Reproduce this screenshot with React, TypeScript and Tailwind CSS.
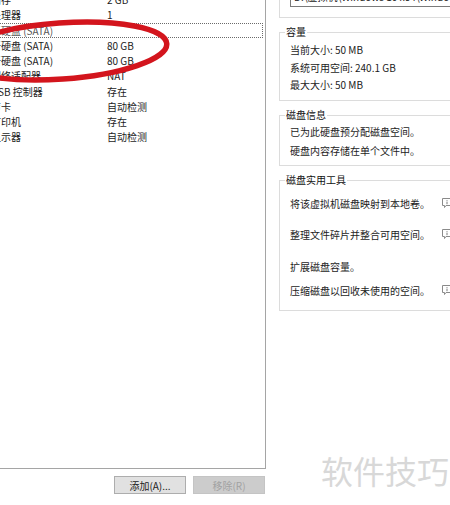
import React from 'react';

const rows: { name: string; value: string; selected?: boolean }[] = [
	{ name: '内存', value: '2 GB' },
	{ name: '处理器', value: '1' },
	{ name: '新硬盘 (SATA)', value: '', selected: true },
	{ name: '新硬盘 (SATA)', value: '80 GB' },
	{ name: '新硬盘 (SATA)', value: '80 GB' },
	{ name: '网络适配器', value: 'NAT' },
	{ name: 'USB 控制器', value: '存在' },
	{ name: '声卡', value: '自动检测' },
	{ name: '打印机', value: '存在' },
	{ name: '显示器', value: '自动检测' },
];

const InfoIcon = () => (
	<svg width="10" height="10" viewBox="0 0 10 10" className="shrink-0">
		<path d="M0.5 7.5V0.5H9.5V7.5H4L2.5 9.5V7.5Z" fill="white" stroke="#8a8a8a" strokeWidth="1" />
		<path d="M5 2v0.8M5 3.6v2.6" stroke="#7a7a7a" strokeWidth="1" />
	</svg>
);

const GroupLabel = ({ children }: { children: React.ReactNode }) => (
	<div className="-mt-[9px] ml-[5px] self-start bg-white px-[1px] leading-[16px] text-[#111]">{children}</div>
);

export default function App() {
	return (
		<div className="relative flex h-[505px] w-[450px] overflow-hidden bg-white font-['Noto_Sans_CJK_SC','Noto_Sans',sans-serif] text-[10px] text-[#1c1c1c]">
			{/* hardware list */}
			<div className="flex w-[266px] shrink-0 flex-col">
				<div className="h-[469px] overflow-hidden border-r border-b border-[#a5a5a5] bg-white">
					<div className="-mt-[8px] -ml-[9px] w-[272px]">
						{rows.map((r, i) => (
							<div
								key={i}
								className={
									'flex h-[15.25px] items-center whitespace-nowrap ' +
									(r.selected ? 'outline-1 -outline-offset-1 outline-dotted outline-[#6a6a6a] text-[#555]' : '')
								}
							>
								<span className="w-[116px]">{r.name}</span>
								<span>{r.value}</span>
							</div>
						))}
					</div>
				</div>
				<div className="mt-[7px] flex justify-end gap-[7px] pr-[1px]">
					<button className="flex h-[18px] w-[72px] items-center justify-center border border-[#adadad] bg-[#e1e1e1] text-[#222]">
						添加(A)...
					</button>
					<button className="flex h-[18px] w-[72px] items-center justify-center border border-[#c4c4c4] bg-[#cccccc] text-[#a2a2a2]">
						移除(R)
					</button>
				</div>
			</div>

			{/* disk settings */}
			<div className="ml-[13px] flex w-[200px] shrink-0 flex-col">
				<div className="h-[18px] border-r border-b border-l border-[#dcdcdc]">
					<div className="-mt-[15px] ml-[10px] h-[22px] w-[200px] overflow-hidden whitespace-nowrap border border-[#7a7a7a] pt-[3px] pl-[3px] leading-[16px] text-[#222]">
						D:\虚拟机\Windows 10 x64\Windows 10 x64.vmdk
					</div>
				</div>

				<div className="mt-[14px] flex h-[69px] flex-col border border-[#dcdcdc]">
					<GroupLabel>容量</GroupLabel>
					<div className="mt-[1px] pl-[10px] leading-[17.5px]">
						<div>当前大小: 50 MB</div>
						<div>系统可用空间: 240.1 GB</div>
						<div>最大大小: 50 MB</div>
					</div>
				</div>

				<div className="mt-[14px] flex h-[51px] flex-col border border-[#dcdcdc]">
					<GroupLabel>磁盘信息</GroupLabel>
					<div className="pl-[10px] leading-[18.5px]">
						<div>已为此硬盘预分配磁盘空间。</div>
						<div>硬盘内容存储在单个文件中。</div>
					</div>
				</div>

				<div className="mt-[14px] flex h-[131px] flex-col border border-[#dcdcdc]">
					<GroupLabel>磁盘实用工具</GroupLabel>
					<div className="pl-[10px]">
						<div className="flex h-[30px] items-center">
							<span className="w-[152px] whitespace-nowrap">将该虚拟机磁盘映射到本地卷。</span>
							<InfoIcon />
						</div>
						<div className="flex h-[32px] items-center">
							<span className="w-[152px] whitespace-nowrap">整理文件碎片并整合可用空间。</span>
							<InfoIcon />
						</div>
						<div className="flex h-[32px] items-center">
							<span className="w-[152px] whitespace-nowrap">扩展磁盘容量。</span>
						</div>
						<div className="flex h-[16px] items-center">
							<span className="w-[152px] whitespace-nowrap">压缩磁盘以回收未使用的空间。</span>
							<InfoIcon />
						</div>
					</div>
				</div>
			</div>

			{/* red hand-drawn mark */}
			<svg className="pointer-events-none absolute top-0 left-0" width="270" height="100" viewBox="0 0 270 100">
				<ellipse cx="61" cy="51" rx="106" ry="28" transform="rotate(-4 61 51)" fill="none" stroke="#d3151d" strokeWidth="5.5" />
			</svg>

			{/* watermark */}
			<div className="pointer-events-none absolute top-[449px] left-[321px] text-[32px] leading-[42px] text-[#d8d8d8]">
				软件技巧
			</div>
		</div>
	);
}
